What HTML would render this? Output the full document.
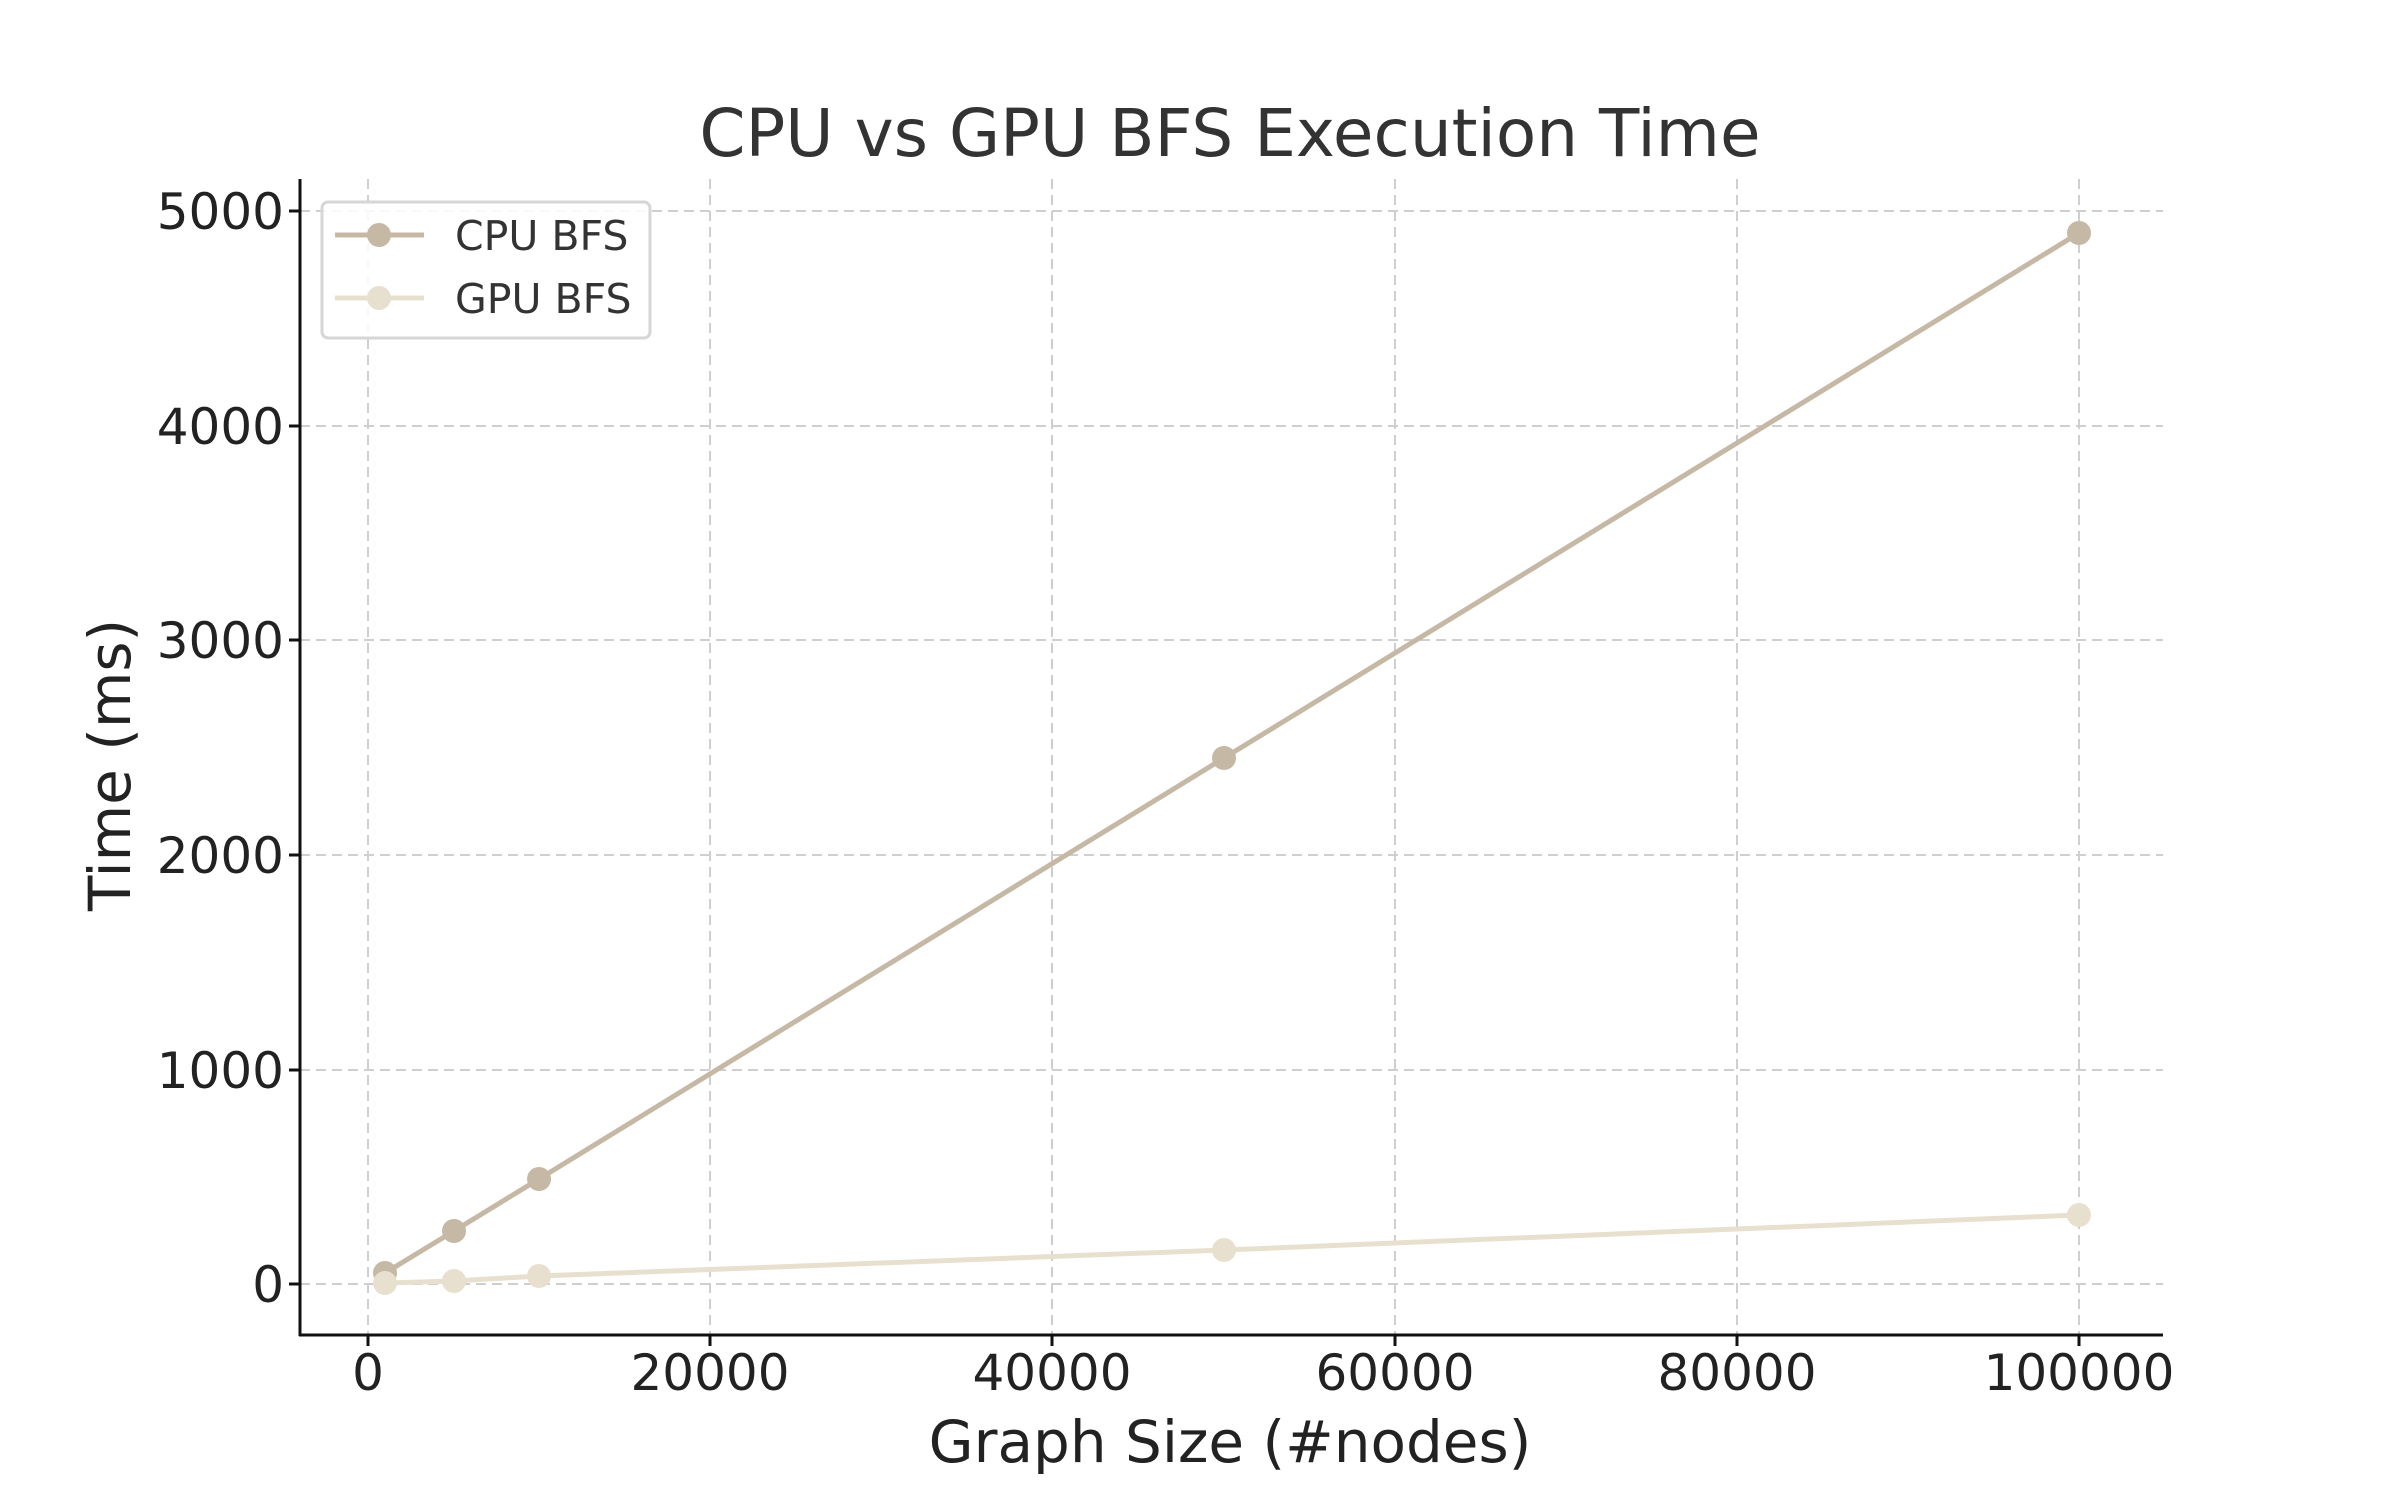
<!DOCTYPE html><html><head><style>body{margin:0;background:#fff}svg{display:block}</style></head><body>
<svg width="2400" height="1500" xmlns="http://www.w3.org/2000/svg" font-family="DejaVu Sans, Liberation Sans, sans-serif">
<rect width="2400" height="1500" fill="#fff"/>
<g stroke="#cfcfcf" stroke-width="2" stroke-dasharray="10,6">
<line x1="368" y1="179" x2="368" y2="1335"/><line x1="710" y1="179" x2="710" y2="1335"/><line x1="1052" y1="179" x2="1052" y2="1335"/><line x1="1395" y1="179" x2="1395" y2="1335"/><line x1="1737" y1="179" x2="1737" y2="1335"/><line x1="2079" y1="179" x2="2079" y2="1335"/>
<line x1="300" y1="1284" x2="2163" y2="1284"/><line x1="300" y1="1070" x2="2163" y2="1070"/><line x1="300" y1="855" x2="2163" y2="855"/><line x1="300" y1="640" x2="2163" y2="640"/><line x1="300" y1="426" x2="2163" y2="426"/><line x1="300" y1="211" x2="2163" y2="211"/>
</g>
<polyline points="385,1273 454,1231 539,1179 1224,758 2079,233" fill="none" stroke="#c5b8a5" stroke-width="5"/>
<g fill="#c5b8a5"><circle cx="385" cy="1273" r="12"/><circle cx="454" cy="1231" r="12"/><circle cx="539" cy="1179" r="12"/><circle cx="1224" cy="758" r="12"/><circle cx="2079" cy="233" r="12"/></g>
<polyline points="385,1283 454,1281 539,1276 1224,1250 2079,1215" fill="none" stroke="#e8e0cf" stroke-width="5"/>
<g fill="#e8e0cf"><circle cx="385" cy="1283" r="12"/><circle cx="454" cy="1281" r="12"/><circle cx="539" cy="1276" r="12"/><circle cx="1224" cy="1250" r="12"/><circle cx="2079" cy="1215" r="12"/></g>
<g stroke="#111" stroke-width="3"><line x1="300" y1="179" x2="300" y2="1336"/><line x1="299" y1="1335" x2="2163" y2="1335"/>
<line x1="368" y1="1335" x2="368" y2="1346"/><line x1="710" y1="1335" x2="710" y2="1346"/><line x1="1052" y1="1335" x2="1052" y2="1346"/><line x1="1395" y1="1335" x2="1395" y2="1346"/><line x1="1737" y1="1335" x2="1737" y2="1346"/><line x1="2079" y1="1335" x2="2079" y2="1346"/>
<line x1="289" y1="1284" x2="300" y2="1284"/><line x1="289" y1="1070" x2="300" y2="1070"/><line x1="289" y1="855" x2="300" y2="855"/><line x1="289" y1="640" x2="300" y2="640"/><line x1="289" y1="426" x2="300" y2="426"/><line x1="289" y1="211" x2="300" y2="211"/></g>
<g font-size="50" fill="#222" text-anchor="middle"><text x="368" y="1390">0</text><text x="710" y="1390">20000</text><text x="1052" y="1390">40000</text><text x="1395" y="1390">60000</text><text x="1737" y="1390">80000</text><text x="2079" y="1390">100000</text></g>
<g font-size="50" fill="#222" text-anchor="end"><text x="284" y="1302">0</text><text x="284" y="1088">1000</text><text x="284" y="873">2000</text><text x="284" y="658">3000</text><text x="284" y="444">4000</text><text x="284" y="229">5000</text></g>
<text x="1230" y="156" font-size="66" fill="#333" text-anchor="middle">CPU vs GPU BFS Execution Time</text>
<text x="1230" y="1462" font-size="58" fill="#222" text-anchor="middle">Graph Size (#nodes)</text>
<text transform="translate(130,765) rotate(-90)" font-size="58" fill="#222" text-anchor="middle">Time (ms)</text>
<rect x="322" y="202" width="328" height="136" rx="6" fill="#fff" fill-opacity="0.85" stroke="#d6d6d6" stroke-width="3"/>
<line x1="335" y1="235" x2="424" y2="235" stroke="#c5b8a5" stroke-width="5"/><circle cx="379" cy="235" r="12" fill="#c5b8a5"/>
<line x1="335" y1="298" x2="424" y2="298" stroke="#e8e0cf" stroke-width="5"/><circle cx="379" cy="298" r="12" fill="#e8e0cf"/>
<text x="455" y="250" font-size="41" fill="#333">CPU BFS</text>
<text x="455" y="313" font-size="41" fill="#333">GPU BFS</text>
</svg></body></html>
